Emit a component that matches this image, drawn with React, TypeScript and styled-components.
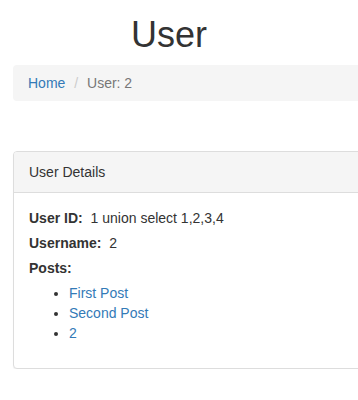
import React from 'react'
import styled, { createGlobalStyle } from 'styled-components'

const GlobalStyle = createGlobalStyle`
  html, body {
    margin: 0;
    padding: 0;
    overflow: hidden;
    background: #fff;
  }
  body {
    font-family: "Liberation Sans", Arial, Helvetica, sans-serif;
    font-size: 14px;
    line-height: 20px;
    color: #333;
  }
`

const Page = styled.div`
  width: 420px;
  padding-left: 13px;
`

const Title = styled.h1`
  width: 312px;
  margin: 15px 0 10px;
  font-size: 36px;
  font-weight: 500;
  line-height: 39.6px;
  text-align: center;
  color: #333;
`

const Breadcrumb = styled.ol`
  display: flex;
  list-style: none;
  margin: 0 0 50px;
  padding: 8px 15px;
  background: #f5f5f5;
  border-radius: 4px;
`

const Crumb = styled.li`
  color: #777;
  white-space: pre;
  & + &::before {
    content: "/\\00a0";
    padding: 0 5px;
    color: #ccc;
  }
`

const Link = styled.a`
  color: #337ab7;
  text-decoration: none;
`

const Panel = styled.div`
  border: 1px solid #ddd;
  border-radius: 4px;
  background: #fff;
  box-shadow: 0 1px 1px rgba(0, 0, 0, 0.05);
`

const PanelHeading = styled.div`
  padding: 10px 15px;
  background: #f5f5f5;
  border-bottom: 1px solid #ddd;
  border-radius: 3px 3px 0 0;
`

const PanelBody = styled.div`
  padding: 15px;
`

const Field = styled.p`
  margin: 0 0 5px;
`

const Label = styled.strong`
  font-weight: 700;
  margin-right: 4px;
`

const PostList = styled.ul`
  margin: 0 0 10px;
  padding-left: 40px;
`

interface IFieldRowProps {
  label: string
  value?: string
}

const FieldRow: React.FC<IFieldRowProps> = ({ label, value }) => (
  <Field>
    <Label>{label}</Label> {value}
  </Field>
)

const posts = ['First Post', 'Second Post', '2']

const App: React.FC = () => {
  return (
    <Page>
      <GlobalStyle />
      <Title>User</Title>
      <Breadcrumb>
        <Crumb><Link href="#">Home</Link> </Crumb>
        <Crumb>User: 2</Crumb>
      </Breadcrumb>
      <Panel>
        <PanelHeading>User Details</PanelHeading>
        <PanelBody>
          <FieldRow label="User ID:" value="1 union select 1,2,3,4" />
          <FieldRow label="Username:" value="2" />
          <FieldRow label="Posts:" />
          <PostList>
            {posts.map((p, i) => (
              <li key={i}><Link href="#">{p}</Link></li>
            ))}
          </PostList>
        </PanelBody>
      </Panel>
    </Page>
  )
}

export default App
